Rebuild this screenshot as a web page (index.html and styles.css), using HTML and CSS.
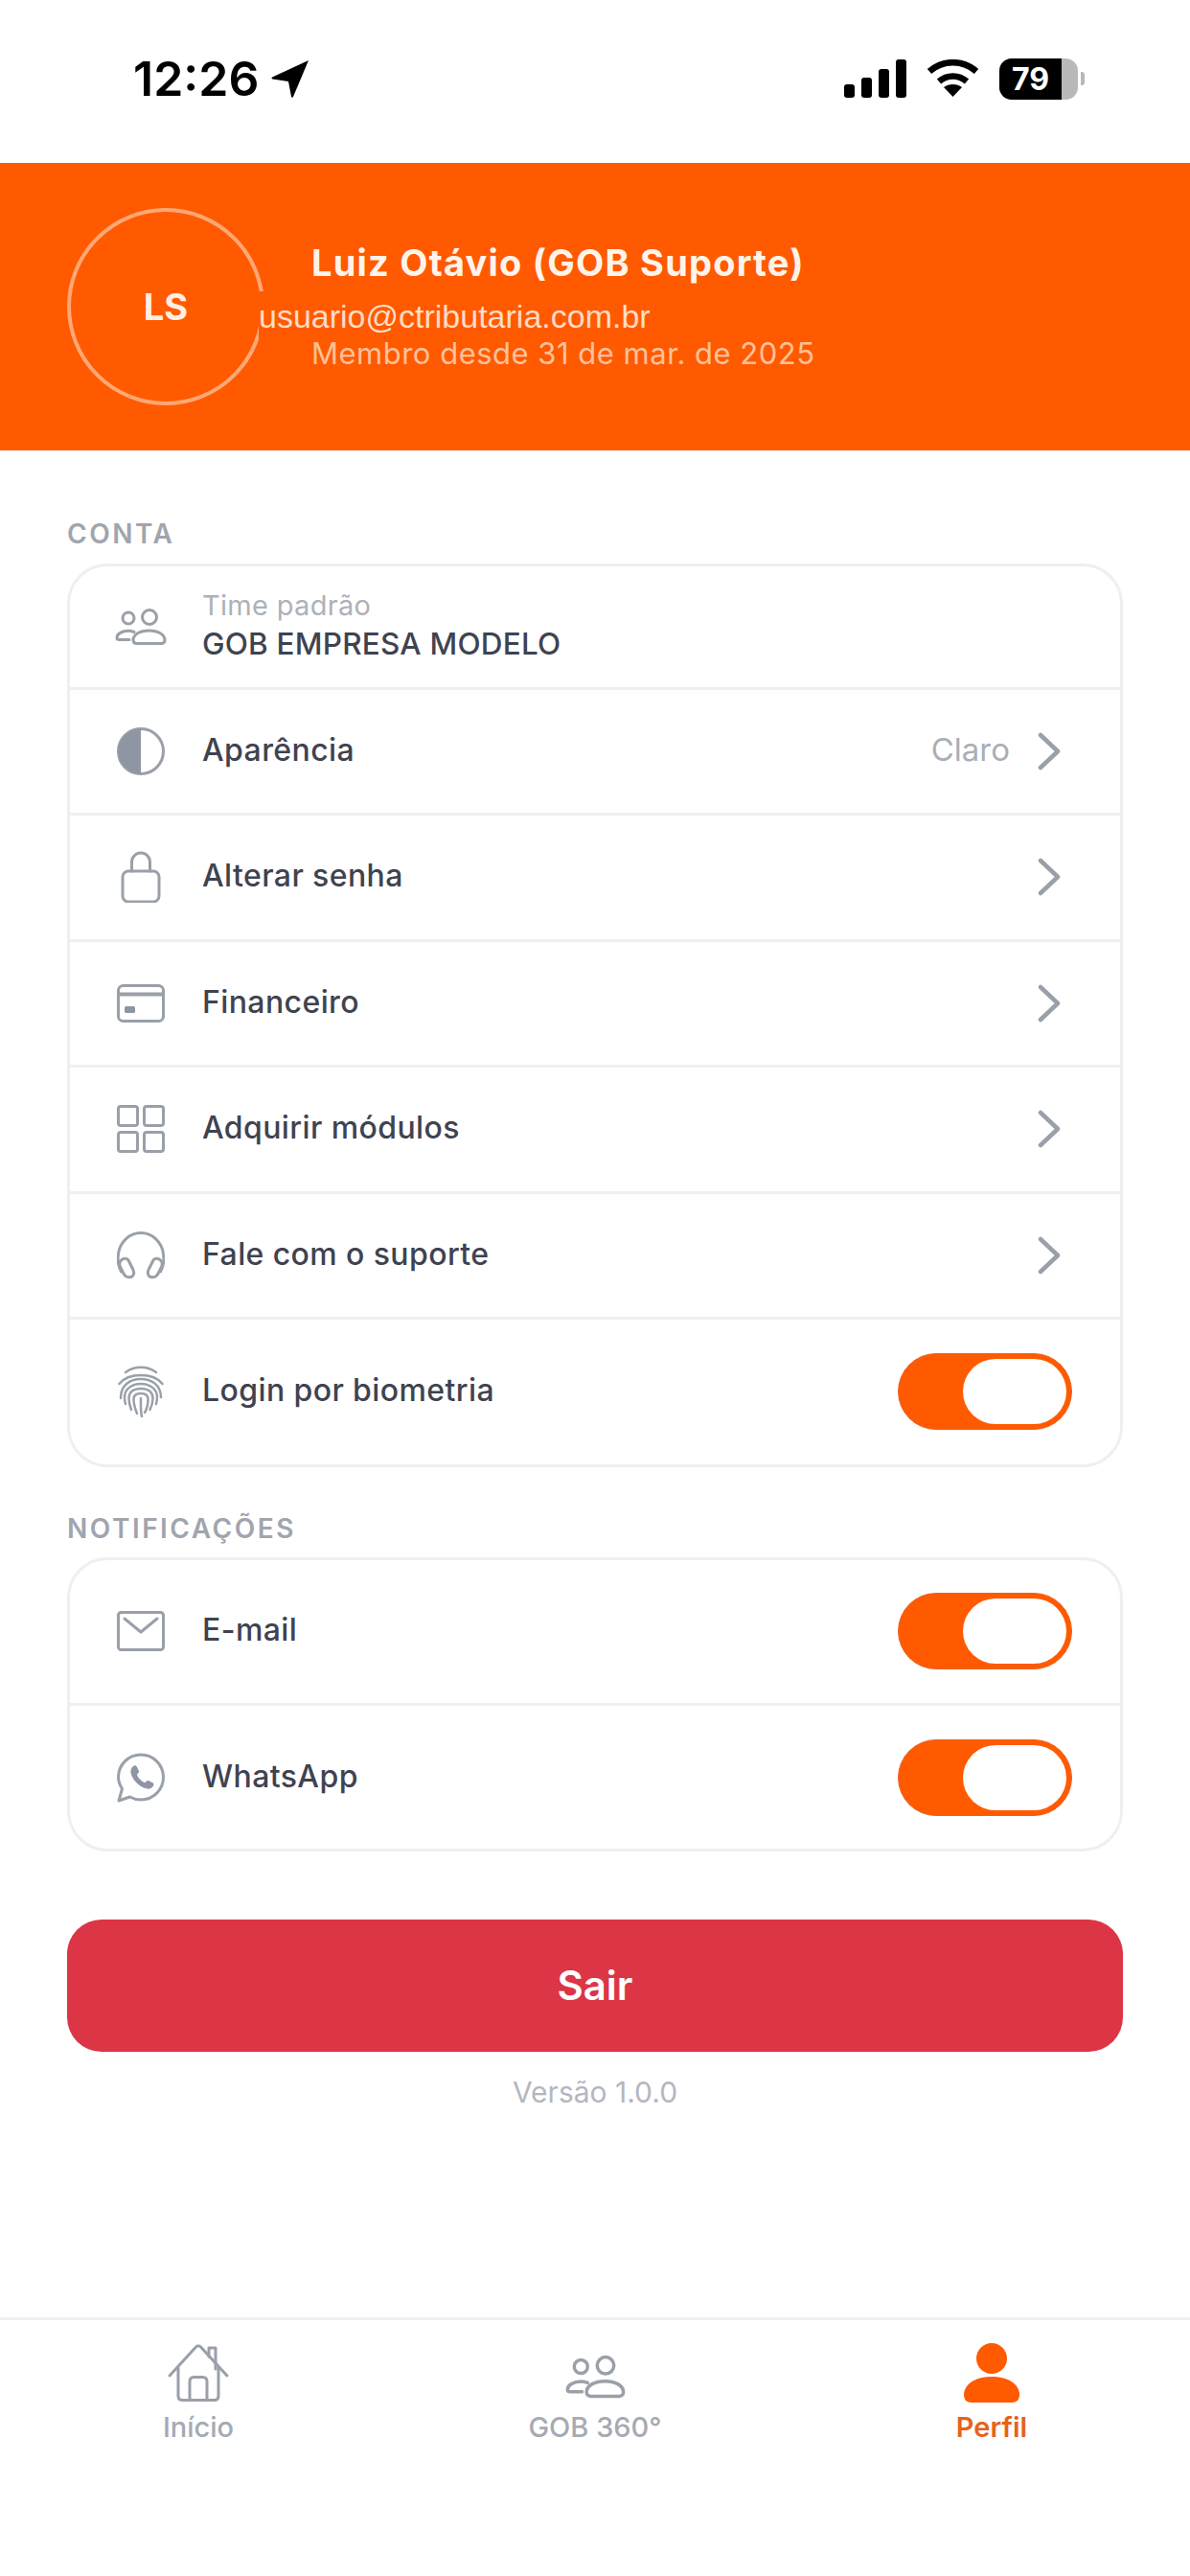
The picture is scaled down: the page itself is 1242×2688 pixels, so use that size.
FILE: index.html
```html
<!DOCTYPE html>
<html lang="pt-BR">
<head>
	<meta charset="UTF-8">
	<title>Perfil</title>
	<link rel="stylesheet" href="styles.css">
</head>
<body>
	<svg class="sprite" width="0" height="0">
		<symbol id="i-people" viewBox="0 0 54 38">
			<circle cx="14" cy="10" r="6"/>
			<circle cx="36" cy="9" r="7.5"/>
			<path d="M19 33c0-6 7-10 16.500-10S52 27 52 33c0 2.500-2 3.500-4 3.500H23c-2 0-4-1-4-3.500z"/>
			<path d="M20 24.500c-2-.8-4-1.200-6-1.200-6.500 0-12 3.200-12 7.200 0 1.500 1 2 2.500 2H15"/>
		</symbol>
		<symbol id="i-chevron" viewBox="0 0 24 40">
			<path d="M3 3l18 17L3 37"/>
		</symbol>
	</svg>

	<div class="page">
		<div class="status">
			<div class="status-time">
				<span>12:26</span>
				<svg class="arrow" viewBox="0 0 40 40"><path d="M39 1L23 39c-.5 1-1.800.8-2-.3L18 23 1.500 20.500c-1.200-.2-1.300-1.600-.3-2z"/></svg>
			</div>
			<div class="status-icons">
				<div class="signal"><i class="s1"></i><i class="s2"></i><i class="s3"></i><i class="s4"></i></div>
				<svg class="wifi" viewBox="0 0 55 40"><path d="M3 12.500C17 0 38 0 52 12.500"/><path d="M13 23c8.500-7.500 20.500-7.500 29 0"/><path class="wifi-dot" d="M27.500 39l-9.500-10c5.500-4 13.500-4 19 0z"/></svg>
				<div class="battery">
					<div class="battery-body"><div class="battery-level">79</div></div>
					<div class="battery-nub"></div>
				</div>
			</div>
		</div>

		<div class="profile">
			<div class="avatar">LS</div>
			<div class="profile-info">
				<div class="profile-name">Luiz Otávio (GOB Suporte)</div>
				<div class="profile-mail">usuario@ctributaria.com.br</div>
				<div class="profile-since">Membro desde 31 de mar. de 2025</div>
			</div>
		</div>

		<div class="content">
			<div class="section-title first">CONTA</div>
			<div class="card">
				<div class="row row-team">
					<span class="icon"><svg class="ic-people"><use href="#i-people"/></svg></span>
					<div class="team-text">
						<div class="team-label">Time padrão</div>
						<div class="team-name">GOB EMPRESA MODELO</div>
					</div>
				</div>
				<div class="row">
					<span class="icon">
						<svg class="ic" viewBox="0 0 50 50"><circle cx="25" cy="25" r="23.500"/><path class="solid" d="M25 1.500a23.500 23.500 0 0 0 0 47z"/></svg>
					</span>
					<span class="row-label">Aparência</span>
					<span class="row-value">Claro</span>
					<svg class="chevron"><use href="#i-chevron"/></svg>
				</div>
				<div class="row">
					<span class="icon">
						<svg class="ic" viewBox="0 0 50 54"><rect x="6" y="21" width="38" height="32" rx="6"/><path d="M15.500 21v-9.500a9.500 9.500 0 0 1 19 0V21"/></svg>
					</span>
					<span class="row-label">Alterar senha</span>
					<svg class="chevron"><use href="#i-chevron"/></svg>
				</div>
				<div class="row">
					<span class="icon">
						<svg class="ic" viewBox="0 0 50 40"><rect x="1.500" y="1.500" width="47" height="37" rx="5"/><path d="M1.500 10.500h47" stroke-width="4"/><rect class="solid" x="8" y="23" width="11" height="7" rx="1.500"/></svg>
					</span>
					<span class="row-label">Financeiro</span>
					<svg class="chevron"><use href="#i-chevron"/></svg>
				</div>
				<div class="row">
					<span class="icon">
						<svg class="ic" viewBox="0 0 50 50"><rect x="1.500" y="1.500" width="20" height="20" rx="2.500"/><rect x="28.500" y="1.500" width="20" height="20" rx="2.500"/><rect x="1.500" y="28.500" width="20" height="20" rx="2.500"/><rect x="28.500" y="28.500" width="20" height="20" rx="2.500"/></svg>
					</span>
					<span class="row-label">Adquirir módulos</span>
					<svg class="chevron"><use href="#i-chevron"/></svg>
				</div>
				<div class="row">
					<span class="icon">
						<svg class="ic" viewBox="0 0 50 50"><path d="M4.500 42C.5 35 1 27 1.500 23.500 3 11 13 1.500 25 1.500S47 11 48.500 23.500c.5 3.500 1 11.500-3 18.500"/><path d="M5 29.500c2.500-2 5.500-1.500 7 .5l5 10c1.500 3.500.5 6.500-2.500 7.500-3 1-6-.5-7.500-3.500l-4-8c-.8-2.500.3-5 2-6.500z"/><path d="M45 29.500c-2.500-2-5.500-1.500-7 .5l-5 10c-1.500 3.500-.5 6.500 2.500 7.500 3 1 6-.5 7.500-3.500l4-8c.8-2.500-.3-5-2-6.500z"/></svg>
					</span>
					<span class="row-label">Fale com o suporte</span>
					<svg class="chevron"><use href="#i-chevron"/></svg>
				</div>
				<div class="row row-bio">
					<span class="icon">
						<svg class="ic ic-thin" viewBox="0 0 48 54"><path d="M8 7c10-7 22-7 32 0"/><path d="M1.500 19C11 7 37 7 46.500 19"/><path d="M3 34C3 20 13 14 24 14s21 6 21 19"/><path d="M8 40c-1-3-1-5-1-7 0-9 8-14 17-14s17 5 17 14c0 3-.5 5-1 7"/><path d="M14 46c-1.500-4-2.500-8-2.500-12C11.500 27 17 24 24 24s12.500 3 12.500 10c0 4-1 8-3 12"/><path d="M20 50c-2-5-3.500-10-3.500-15 0-4 3-6 7.500-6s7.500 2 7.500 6c0 5-1 10-3.500 14"/><path d="M24 34c0 7-.5 13 1 19"/></svg>
					</span>
					<span class="row-label">Login por biometria</span>
					<div class="toggle"><div class="knob"></div></div>
				</div>
			</div>

			<div class="section-title second">NOTIFICAÇÕES</div>
			<div class="card">
				<div class="row row-mail">
					<span class="icon">
						<svg class="ic" viewBox="0 0 50 42"><rect x="1.500" y="1.500" width="47" height="39" rx="3"/><path d="M8 8l17 14L42 8"/></svg>
					</span>
					<span class="row-label">E-mail</span>
					<div class="toggle"><div class="knob"></div></div>
				</div>
				<div class="row row-whats">
					<span class="icon">
						<svg class="ic" viewBox="0 0 50 52"><path d="M2 50l3.500-12.500C3 33.500 1.500 29.500 1.500 25.500 1.500 12.500 12 2 25 2s23.500 10.500 23.500 23.500S38 49 25 49c-4 0-8-1-11.500-3z"/><path class="solid" d="M17 14c1-1 3-1 3.500 0l2.500 5c.3 1-.2 1.800-1 2.500-.8.8-1.200 1.300-.7 2.200 1.500 3 4 5.500 7 7 .9.5 1.600 0 2.300-.8.7-.8 1.500-1.200 2.400-.8l4.700 2.300c1 .5 1 1.500.3 3.200-1 2.300-4 3.400-6.500 3-7-1-16-9.500-17-17-.3-2.400.5-4.600 2-6.100z"/></svg>
					</span>
					<span class="row-label">WhatsApp</span>
					<div class="toggle"><div class="knob"></div></div>
				</div>
			</div>

			<div class="logout">Sair</div>
			<div class="version">Versão 1.0.0</div>
		</div>

		<div class="tabs">
			<div class="tab">
				<span class="tab-icon">
					<svg class="ic ic-home" viewBox="0 0 66 62"><path d="M3 34L30.500 4c1.400-1.400 3.600-1.400 5 0L63 34"/><path d="M44 14V5h7v22"/><path d="M12 26v29c0 3 1.500 4.500 4.500 4.500h33c3 0 4.500-1.500 4.500-4.500V26"/><path d="M24 59V40c0-3 1.500-4.500 4.500-4.500h9c3 0 4.500 1.500 4.500 4.500v19"/></svg>
				</span>
				<span class="tab-label">Início</span>
			</div>
			<div class="tab">
				<span class="tab-icon"><svg class="ic-people tab-people"><use href="#i-people"/></svg></span>
				<span class="tab-label">GOB 360°</span>
			</div>
			<div class="tab tab-active">
				<span class="tab-icon">
					<svg class="ic-user" viewBox="0 0 58 62"><circle cx="29" cy="16" r="16"/><path d="M0 54C0 42 13 35 29 35s29 7 29 19c0 5-3 8-8 8H8c-5 0-8-3-8-8z"/></svg>
				</span>
				<span class="tab-label">Perfil</span>
			</div>
		</div>
	</div>
</body>
</html>
```

FILE: styles.css
```css
*{margin:0;padding:0;box-sizing:border-box;}
body{background:#fff;font-family:Inter,"Noto Sans",sans-serif;color:#3f4350;}
.sprite{display:block;height:0;}
.page{width:1242px;height:2688px;display:flex;flex-direction:column;overflow:hidden;}

/* status bar */
.status{height:170px;display:flex;justify-content:space-between;padding:55px 110px 0 139px;color:#000;}
.status-time{display:flex;align-items:center;height:54px;gap:13px;font-size:50px;font-weight:600;}
.arrow{width:40px;height:40px;fill:#000;}
.status-icons{display:flex;align-items:center;height:54px;gap:21px;}
.signal{display:flex;align-items:flex-end;gap:7px;height:40px;}
.signal i{display:block;width:11px;background:#000;border-radius:3px;}
.signal .s1{height:14px;}
.signal .s2{height:21px;}
.signal .s3{height:30px;}
.signal .s4{height:40px;}
.wifi{width:55px;height:40px;fill:none;stroke:#000;stroke-width:6.500;}
.wifi .wifi-dot{fill:#000;stroke:none;}
.battery{display:flex;align-items:center;gap:3px;}
.battery-body{width:82px;height:43px;border-radius:13px;background:#b8b8b8;overflow:hidden;}
.battery-level{width:65px;height:43px;background:#000;color:#fff;font-size:32px;font-weight:700;line-height:43px;text-align:center;}
.battery-nub{width:4px;height:14px;background:#b8b8b8;border-radius:0 3px 3px 0;}

/* orange header */
.profile{height:300px;background:#ff5a00;display:flex;align-items:center;padding-left:70px;gap:49px;color:#fff;}
.avatar{width:206px;height:206px;border-radius:50%;border:4px solid #ffa875;display:flex;align-items:center;justify-content:center;font-size:38px;font-weight:700;color:#ffeee3;flex:none;}
.profile-info{display:flex;flex-direction:column;}
.profile-name{font-size:38px;font-weight:700;line-height:44px;letter-spacing:1.200px;color:#fff3ea;}
.profile-mail{font-family:"Liberation Sans",Arial,sans-serif;font-size:34px;line-height:52px;margin:8px 0 0 -55px;padding-right:10px;background:#ff5a00;color:#ffdcc5;position:relative;width:max-content;}
.profile-since{font-size:31px;line-height:38px;margin-top:-6px;letter-spacing:.5px;color:#ffc19a;}

/* cards */
.content{padding:0 70px;display:flex;flex-direction:column;}
.section-title{font-size:28px;font-weight:600;line-height:34px;letter-spacing:2.500px;color:#a0a5ae;}
.section-title.first{margin-top:70px;margin-bottom:13.500px;}
.section-title.second{margin-top:47px;margin-bottom:13px;}
.card{border:3px solid #eeeff0;border-radius:42px;display:flex;flex-direction:column;}
.row{height:131.500px;display:flex;align-items:center;padding:0 50px 0 47px;border-bottom:3px solid #eeeff0;}
.row:last-child{border-bottom:0;}
.row-team{height:129px;}
.row-bio{height:150.500px;}
.row-mail{height:152.500px;}
.row-whats{height:149px;}
.icon{width:54px;margin-right:37px;display:flex;justify-content:center;align-items:center;flex:none;}
.ic,.ic-people{fill:none;stroke:#9aa0a9;stroke-width:3;stroke-linecap:round;stroke-linejoin:round;}
.ic{width:50px;display:block;}
.ic-people{width:54px;height:38px;display:block;}
.ic-thin{width:48px;stroke-width:2.500;}
.ic .solid{fill:#8f96a3;stroke:none;}
.row-label{font-size:32px;font-weight:450;letter-spacing:.4px;flex:1;padding-bottom:3px;}
.row-value{font-size:33px;color:#a9aeb7;margin-right:29px;padding-bottom:3px;}
.chevron{width:24px;height:40px;margin-right:12px;fill:none;stroke:#9aa0a9;stroke-width:4.500;stroke-linecap:round;stroke-linejoin:round;}
.team-label{font-size:29px;line-height:36px;letter-spacing:.3px;color:#adb1ba;}
.team-name{font-size:31.500px;font-weight:450;line-height:42px;margin-top:1px;letter-spacing:.2px;}
.toggle{width:182px;height:80px;border-radius:40px;background:#ff5a00;padding:5px;display:flex;justify-content:flex-end;flex:none;border:1px solid #e8642a;}
.knob{width:108px;height:68px;border-radius:34px;background:#fff;}

.logout{height:138px;margin-top:70.500px;border-radius:36px;background:#dc3545;color:#fff;font-size:42px;font-weight:600;display:flex;align-items:center;justify-content:center;}
.version{margin-top:25px;font-size:30px;line-height:34px;color:#b3b7bf;text-align:center;}

/* bottom tabs */
.tabs{margin-top:auto;height:270px;border-top:3px solid #f0f0f2;display:grid;grid-template-columns:repeat(3,1fr);padding-top:24px;}
.tab{display:flex;flex-direction:column;align-items:center;}
.tab-icon{height:61px;display:flex;align-items:center;}
.tab-label{margin-top:10px;font-size:29px;font-weight:500;line-height:34px;color:#a5aab3;}
.ic-home{width:66px;height:62px;}
.tab-people{width:63px;height:46px;margin-top:8px;}
.ic-user{width:58px;height:62px;fill:#ff5a00;}
.tab-active .tab-label{color:#e8621a;font-weight:600;}
```
